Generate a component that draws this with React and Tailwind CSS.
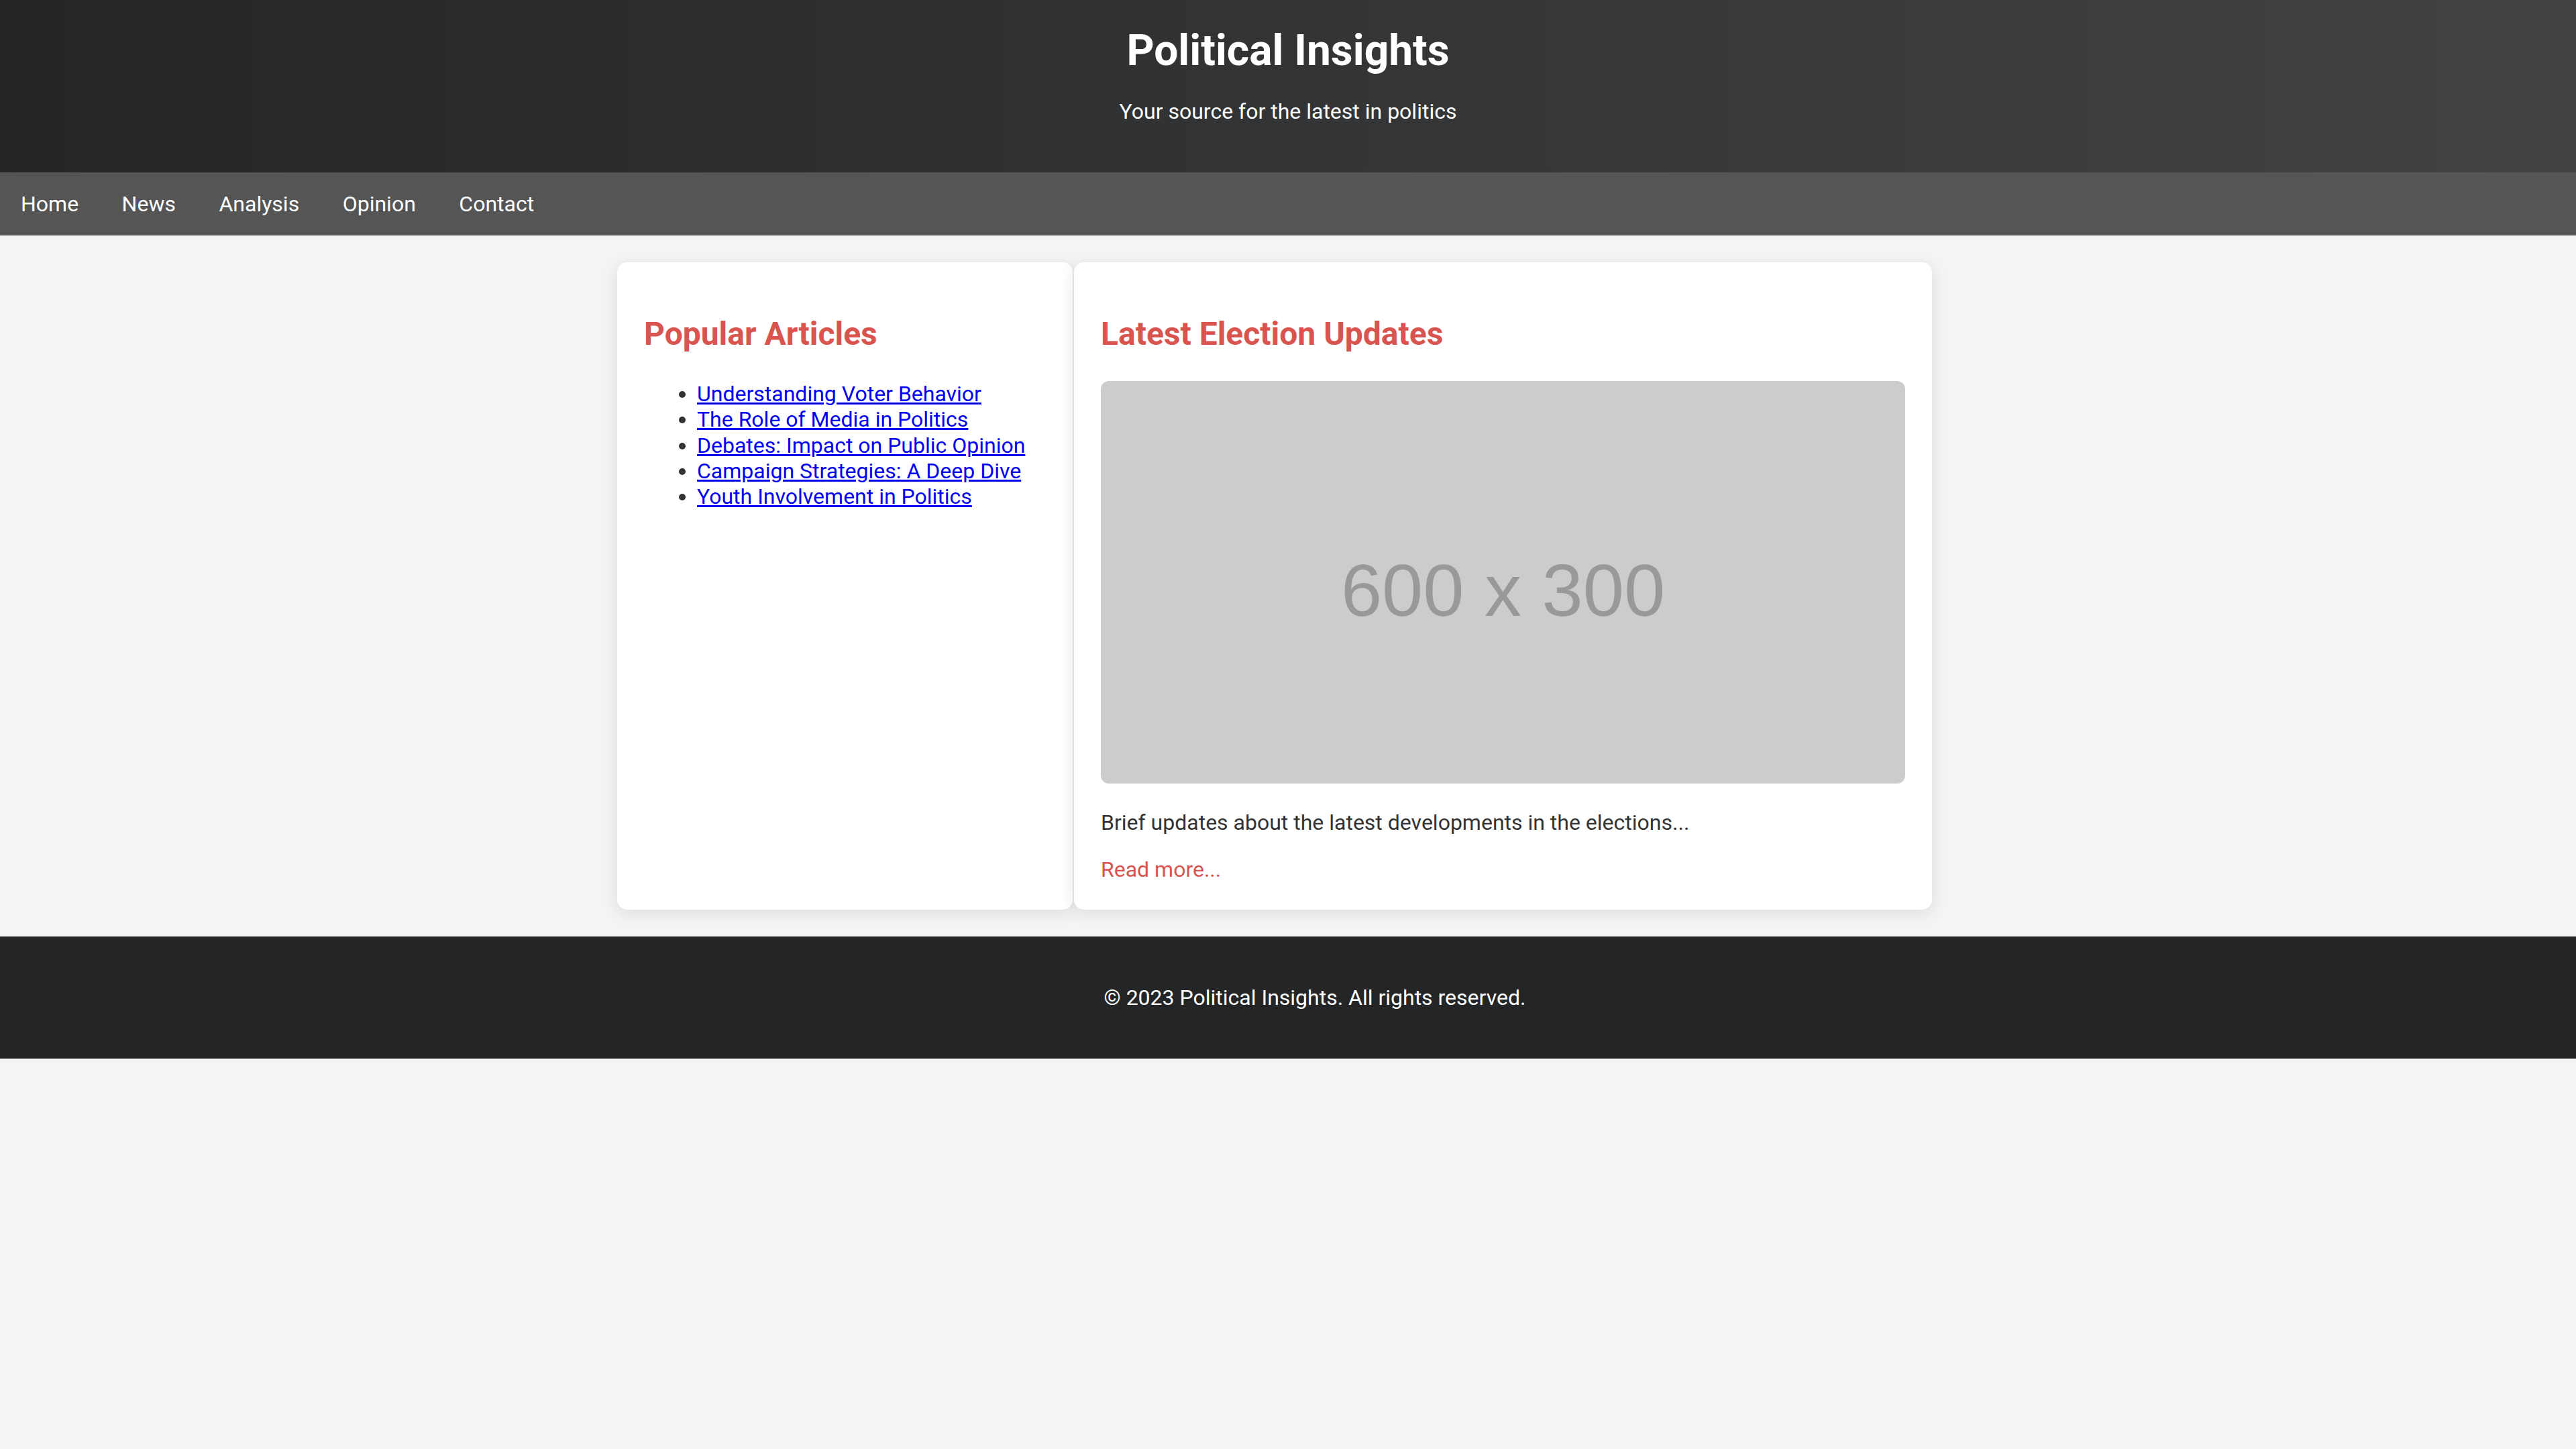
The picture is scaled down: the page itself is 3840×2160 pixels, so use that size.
import React from "react";

const articles = [
  "Understanding Voter Behavior",
  "The Role of Media in Politics",
  "Debates: Impact on Public Opinion",
  "Campaign Strategies: A Deep Dive",
  "Youth Involvement in Politics",
];

const navLinks = ["Home", "News", "Analysis", "Opinion", "Contact"];

export default function App() {
  return (
    <div className="min-h-screen bg-[#f4f4f4] font-['Roboto',sans-serif] text-[#333]">
      {/* Header */}
      <header className="h-[257px] bg-linear-to-r from-[#232526] to-[#414345] pt-[38px] text-center text-white">
        <h1 className="text-[64px] font-bold leading-[76px]">Political Insights</h1>
        <p className="mt-[32.5px] text-[32px] leading-[38px]">
          Your source for the latest in politics
        </p>
      </header>

      {/* Nav */}
      <nav className="flex h-[94px] items-center gap-[64.5px] bg-[#555] pl-[31px] text-[32px] leading-[38px] text-white">
        {navLinks.map((link) => (
          <a key={link} href="#">
            {link}
          </a>
        ))}
      </nav>

      {/* Main */}
      <main className="mx-auto flex w-[2000px] gap-[2px] py-[40px]">
        {/* Popular Articles */}
        <aside className="w-[679px] rounded-[15px] bg-white px-[40px] pt-[40px] pb-[41px] shadow-[0_5px_25px_rgba(0,0,0,0.1)]">
          <h2 className="mt-[38px] mb-[41px] text-[48px] font-bold leading-[58px] text-[#d9534f]">
            Popular Articles
          </h2>
          <ul className="list-disc pl-[79px] text-[32px] leading-[38.3px]">
            {articles.map((a) => (
              <li key={a}>
                <a href="#" className="text-[#0000ee] underline">
                  {a}
                </a>
              </li>
            ))}
          </ul>
        </aside>

        {/* Latest Election Updates */}
        <section className="w-[1279px] rounded-[15px] bg-white px-[40px] pt-[40px] pb-[41px] shadow-[0_5px_25px_rgba(0,0,0,0.1)]">
          <h2 className="mt-[38px] mb-[41px] text-[48px] font-bold leading-[58px] text-[#d9534f]">
            Latest Election Updates
          </h2>
          <div className="flex h-[600px] items-center justify-center rounded-[12px] bg-[#ccc] pt-[23px] font-['Liberation_Sans',Arial,sans-serif] text-[110px] leading-normal text-[#999]">
            600 x 300
          </div>
          <p className="mt-[38.7px] text-[32px] leading-[38px]">
            Brief updates about the latest developments in the elections...
          </p>
          <a href="#" className="mt-[32.3px] block text-[32px] leading-[38px] text-[#d9534f]">
            Read more...
          </a>
        </section>
      </main>

      {/* Footer */}
      <footer className="flex h-[182px] items-center justify-center bg-[#232526] pl-[80px] text-[32px] leading-[38px] text-white">
        © 2023 Political Insights. All rights reserved.
      </footer>
    </div>
  );
}
